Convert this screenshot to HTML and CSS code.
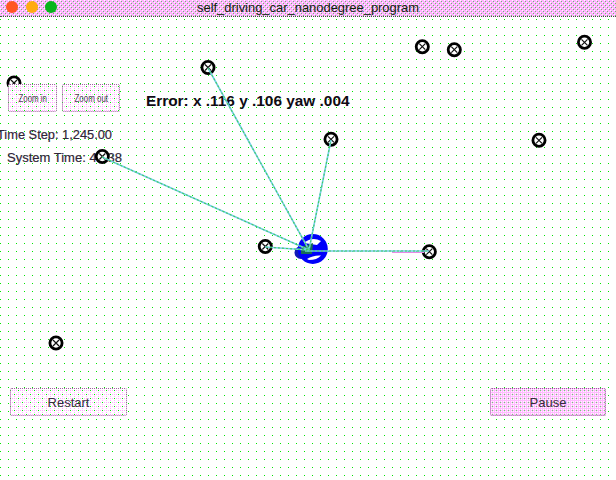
FILE: index.html
```
<!DOCTYPE html>
<html lang="en">
<head>
<meta charset="utf-8">
<title>self_driving_car_nanodegree_program</title>
<link rel="stylesheet" href="styles.css">
</head>
<body>
<div class="window">
  <header class="titlebar">
    <div class="lights"><i class="light red"></i><i class="light yellow"></i><i class="light green"></i></div>
    <svg class="title" width="224" height="17"><text x="1" y="11.5" textLength="222" lengthAdjust="spacingAndGlyphs">self_driving_car_nanodegree_program</text></svg>
  </header>
  <main class="stage">
    <svg class="map" width="616" height="463" viewBox="0 17 616 463">
      <defs>
        <g id="mark"><circle r="6.1" fill="#fff" stroke="#000" stroke-width="2.8"/><path d="M-3-3 3 3M3-3-3 3" stroke="#111" stroke-width="1.2"/></g>
      </defs>
      <g class="readouts">
        <text x="-3" y="138.5" textLength="115" lengthAdjust="spacingAndGlyphs">Time Step: 1,245.00</text>
        <text x="7" y="161.5" textLength="115" lengthAdjust="spacingAndGlyphs">System Time: 46.38</text>
        <text class="error" x="146" y="105.5" textLength="203.5" lengthAdjust="spacingAndGlyphs">Error: x .116 y .106 yaw .004</text>
      </g>
      <use href="#mark" x="14" y="83"/><use href="#mark" x="208" y="67.5"/>
      <use href="#mark" x="422.3" y="46.7"/><use href="#mark" x="454.3" y="49.7"/>
      <use href="#mark" x="584.5" y="42.3"/><use href="#mark" x="539" y="140.3"/>
      <use href="#mark" x="331" y="139.3"/><use href="#mark" x="102.3" y="156.5"/>
      <use href="#mark" x="265.3" y="246.5"/><use href="#mark" x="429.3" y="251.7"/>
      <use href="#mark" x="56" y="343"/>
      <g class="car">
        <circle cx="301" cy="252.5" r="6.5" fill="#1119b8"/>
        <circle cx="312.8" cy="249" r="15" fill="#0000fa"/>
        <path d="M304 243Q312 236 321 241L317 245Z" fill="#fff"/>
        <path d="M307 259Q313 255 321 255.500Q317 260 309 260Z" fill="#fff"/>
        <path d="M301 247 313 243 312 254 301 254Z" fill="#176c57"/>
      </g>
      <path class="rays" d="M208 68 309 250 331 140M102 157 309 250 265 247M305 251H429"/>
      <path d="M392 252.5H424" stroke="#e889e8"/>
      <path class="dash" d="M208 68 309 250 331 140M102 157 309 250 265 247M305 251H429"/>
    </svg>
    <div class="zoom">
      <div class="button"><svg width="30" height="14"><text x="0.500" y="10.500" textLength="28.500" lengthAdjust="spacingAndGlyphs">Zoom in</text></svg></div>
      <div class="button"><svg width="35" height="14"><text x="0.500" y="10.500" textLength="33.500" lengthAdjust="spacingAndGlyphs">Zoom out</text></svg></div>
    </div>
    <footer class="controls"><div class="button large">Restart</div><div class="button large pause">Pause</div></footer>
  </main>
</div>
</body>
</html>
```
FILE: styles.css
```
* { box-sizing: border-box; }
body { margin: 0; overflow: hidden; background: #fff; font-family: "Liberation Sans", Arial, sans-serif; }
.window { width: 616px; height: 480px; display: flex; flex-direction: column; }
.titlebar {
  height: 17px; flex: none; display: grid; grid-template-columns: 196px 224px 196px;
  background: #ffb0ff url("data:image/svg+xml,%3Csvg xmlns='http://www.w3.org/2000/svg' width='4' height='4' shape-rendering='crispEdges'%3E%3Cpath fill='%23fff' d='M0 0h1v1H0zM2 2h1v1H2z'/%3E%3Cpath fill='%2370c070' d='M1 1h1v1H1zM3 3h1v1H3z'/%3E%3C/svg%3E");
  border-bottom: 1px dotted #386838;
}
.lights { display: flex; gap: 7.5px; padding: .5px 0 0 6px; }
.light { width: 12px; height: 12px; border-radius: 50%; }
.red { background: #ff5722; }
.yellow { background: #ffab12; }
.green { background: #08b51b; }
.title { font-size: 13px; fill: #102010; }
.stage {
  position: relative; flex: 1; display: flex; flex-direction: column; justify-content: space-between;
  padding: 67px 10px 64px;
  background: url("data:image/svg+xml,%3Csvg xmlns='http://www.w3.org/2000/svg' width='8' height='8' shape-rendering='crispEdges'%3E%3Cpath fill='%2300e800' d='M0 2h1v1H0z'/%3E%3C/svg%3E");
}
.map { position: absolute; left: 0; top: 0; }
.readouts text { font-size: 13px; fill: #302638; stroke: #302638; stroke-width: .2px; }
.readouts .error { font-size: 15px; font-weight: bold; fill: #100b14; stroke: none; }
.rays { fill: none; stroke: #74cce8; stroke-width: 1.6; }
.dash { fill: none; stroke: #40d060; stroke-width: 1.1; stroke-dasharray: 2 2; }
.zoom { position: relative; display: flex; gap: 5px; margin-left: -2px; }
.button {
  width: 49px; height: 28px; display: flex; align-items: center; justify-content: center;
  border: 1px dotted #a060a0; border-radius: 2px;
  background: #fff url("data:image/svg+xml,%3Csvg xmlns='http://www.w3.org/2000/svg' width='8' height='8' shape-rendering='crispEdges'%3E%3Cpath fill='%23ffaaff' d='M1 1h1v1h-1zM5 1h1v1h-1zM3 3h1v1h-1zM7 3h1v1h-1zM1 5h1v1h-1zM5 5h1v1h-1zM3 7h1v1h-1zM7 7h1v1h-1zM3 1h1v1h-1zM7 5h1v1h-1z'/%3E%3Cpath fill='%2300e800' d='M7 1h1v1h-1zM3 5h1v1h-1z'/%3E%3C/svg%3E");
  font-size: 10px; color: #514256;
}
.zoom .button + .button { width: 58px; }
.zoom text { fill: #514256; }
.controls { position: relative; display: flex; justify-content: space-between; }
.large { width: 117px; height: 28px; font-size: 13px; color: #382b3d; }
.pause {
  width: 116px;
  background: #ffbaff url("data:image/svg+xml,%3Csvg xmlns='http://www.w3.org/2000/svg' width='4' height='4' shape-rendering='crispEdges'%3E%3Cpath fill='%23fff' d='M0 0h1v1H0zM2 0h1v1H2zM0 2h1v1H0zM2 2h1v1H2z'/%3E%3Cpath fill='%2370d870' d='M1 1h1v1H1z'/%3E%3C/svg%3E");
}
```
